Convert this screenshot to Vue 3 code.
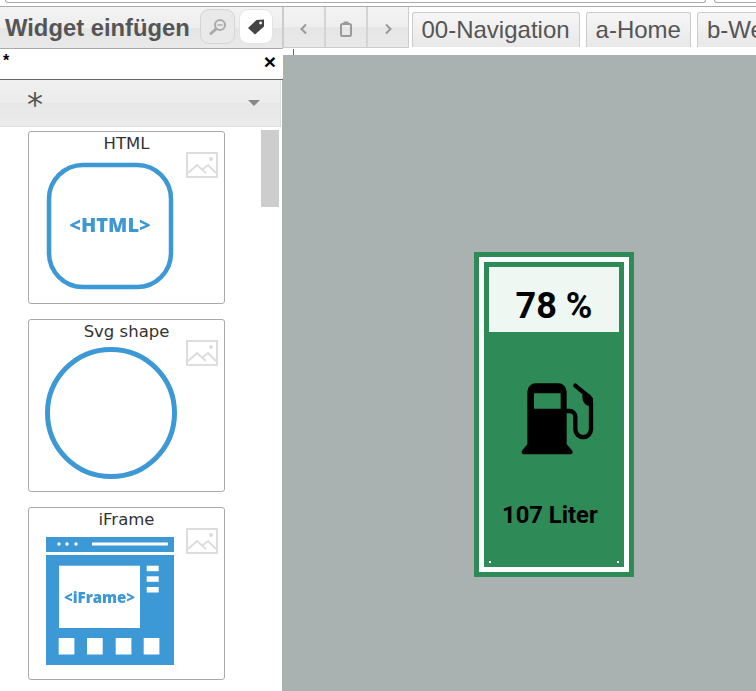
<script setup>
const tabs = ['00-Navigation', 'a-Home', 'b-Wetter']
</script>

<template>
  <div class="page">
    <div class="topstrip">
      <div class="addr a1"></div>
      <div class="addr a2"></div>
    </div>
    <div class="main">
      <aside class="panel">
        <header class="phead">
          <h1 class="ptitle">Widget einfügen</h1>
          <button class="pbtn">
            <svg width="20" height="20" viewBox="0 0 20 20"><circle cx="12" cy="8" r="5" fill="none" stroke="#aaa" stroke-width="2"/><path d="M8 12 3 16.500" stroke="#aaa" stroke-width="3" stroke-linecap="round"/><path d="M9.500 8h5" stroke="#aaa" stroke-width="1.500"/></svg>
          </button>
          <button class="pbtn active">
            <svg width="20" height="20" viewBox="0 0 20 20"><path d="M10.500 3 18 2.500v7L9 17.500 2 11z" fill="#444"/><circle cx="14.600" cy="6" r="1.400" fill="#fff"/></svg>
          </button>
        </header>
        <div class="filter"><span class="fstar">*</span><span class="fx">×</span></div>
        <div class="lower">
          <div class="select"><span class="sstar">*</span><span class="caret"></span></div>
          <div class="list">
            <div class="cards">
              <article class="card">
                <div class="ctitle">HTML</div>
                <svg class="ph" viewBox="0 0 32 26"><use href="#ph"/></svg>
                <div class="preview">
                  <svg width="130" height="130" viewBox="0 0 130 130">
                    <rect x="4" y="4" width="122" height="122" rx="34" fill="#fff" stroke="#3d98d6" stroke-width="4.500"/>
                    <text x="65" y="71" text-anchor="middle" class="svgt t1">&lt;HTML&gt;</text>
                  </svg>
                </div>
              </article>
              <article class="card">
                <div class="ctitle">Svg shape</div>
                <svg class="ph" viewBox="0 0 32 26"><use href="#ph"/></svg>
                <div class="preview">
                  <svg width="134" height="134" viewBox="0 0 134 134">
                    <circle cx="67" cy="67" r="63.500" fill="#fff" stroke="#3d98d6" stroke-width="5"/>
                  </svg>
                </div>
              </article>
              <article class="card">
                <div class="ctitle">iFrame</div>
                <svg class="ph" viewBox="0 0 32 26"><use href="#ph"/></svg>
                <div class="preview">
                  <svg width="128" height="128" viewBox="0 0 128 128">
                    <rect x="0" y="0" width="128" height="15" fill="#3d98d6"/>
                    <rect x="0" y="18" width="128" height="110" fill="#3d98d6"/>
                    <g fill="#fff">
                      <circle cx="13" cy="7" r="1.700"/><circle cx="21" cy="7" r="1.700"/><circle cx="30" cy="7" r="1.700"/>
                      <rect x="46" y="5.500" width="76" height="3"/>
                      <rect x="13" y="28.700" width="81" height="62.300"/>
                      <rect x="100.700" y="28.700" width="12" height="5.500"/><rect x="100.700" y="39.300" width="12" height="5.500"/><rect x="100.700" y="50" width="12" height="5.500"/>
                      <rect x="12.700" y="101" width="15.700" height="16.500"/><rect x="41" y="101" width="15.700" height="16.500"/><rect x="69.700" y="101" width="15.700" height="16.500"/><rect x="97.700" y="101" width="15.700" height="16.500"/>
                    </g>
                    <text x="53.500" y="65.500" text-anchor="middle" class="svgt t2">&lt;iFrame&gt;</text>
                  </svg>
                </div>
              </article>
            </div>
            <div class="scrollbar"><div class="thumb"></div></div>
          </div>
        </div>
      </aside>
      <section class="right">
        <div class="rbar">
          <div class="navgroup">
            <button class="nbtn">
              <svg width="10" height="12" viewBox="0 0 10 12"><path d="M7 1.500 2.500 6 7 10.500" fill="none" stroke="#999" stroke-width="2"/></svg>
            </button>
            <button class="nbtn">
              <svg width="14" height="16" viewBox="0 0 14 16"><rect x="2" y="3" width="10" height="12" rx="1.500" fill="none" stroke="#999" stroke-width="2"/><rect x="4.500" y="0.500" width="5" height="3.500" fill="#999"/></svg>
            </button>
            <button class="nbtn">
              <svg width="10" height="12" viewBox="0 0 10 12"><path d="M3 1.500 7.500 6 3 10.500" fill="none" stroke="#999" stroke-width="2"/></svg>
            </button>
          </div>
          <div class="tabs">
            <div v-for="t in tabs" :key="t" class="tab">{{ t }}</div>
          </div>
        </div>
        <div class="canvaswrap">
          <i class="tick"></i>
          <div class="canvas">
            <div class="widget">
              <div class="wborder">
                <div class="winner">
                  <div class="pct">78 %</div>
                  <svg class="pump" width="75" height="75" viewBox="165 410 225 225">
                    <path fill="#000" fill-rule="evenodd" d="M187 442a25 25 0 0 1 25-25h68a25 25 0 0 1 25 25v158l16 18c4 5 2 12-5 12H177c-7 0-9-7-5-12l15-18zM207 447v46h80v-46z"/>
                    <path fill="none" stroke="#000" stroke-width="13" d="M300 500h14a17 17 0 0 1 17 17v38a22 22 0 0 0 47 0V475"/>
                    <path fill="none" stroke="#000" stroke-width="13" stroke-linecap="round" d="M331 424 372 458"/>
                    <path fill="#000" d="M352 452l20-4 12 14v22h-15c-10-2-18-14-17-32z"/>
                  </svg>
                  <div class="liters">107 Liter</div>
                  <i class="dot d1"></i><i class="dot d2"></i>
                </div>
              </div>
            </div>
          </div>
        </div>
      </section>
    </div>
    <svg width="0" height="0" class="defs">
      <symbol id="ph" viewBox="0 0 32 26">
        <rect x="1" y="1" width="30" height="24" fill="none" stroke="#ddd" stroke-width="2"/>
        <path d="M2 21 11 13l9 8M17 17l5-4 8 8" fill="none" stroke="#ddd" stroke-width="2"/>
        <circle cx="25" cy="7" r="2" fill="#ddd"/>
      </symbol>
    </svg>
  </div>
</template>

<style scoped>
.page {
  width: 756px;
  height: 691px;
  overflow: hidden;
  background: #fff;
  font-family: "Liberation Sans", Arial, sans-serif;
  display: flex;
  flex-direction: column;
}
.defs { position: absolute; }
.topstrip {
  height: 6px;
  flex: none;
  border-bottom: 1px solid #aaa;
  display: flex;
  gap: 8px;
  padding-left: 5px;
  overflow: hidden;
}
.addr {
  height: 2px;
  border: 1px solid #aaa;
  border-top: 0;
  border-radius: 0 0 4px 4px;
  background: #fff;
}
.a1 { width: 699px; }
.a2 { flex: 1; margin-right: -10px; }
.main { flex: 1; display: flex; min-height: 0; }
.panel {
  width: 283px;
  flex: none;
  display: flex;
  flex-direction: column;
  background: #fff;
}
.phead {
  height: 42px;
  flex: none;
  display: flex;
  align-items: center;
  padding: 0 0 2px 5px;
  box-sizing: border-box;
  background: linear-gradient(#f3f3f3 0, #eeeeee 50%, #e5e5e5 50%, #e9e9e9 100%);
  border-bottom: 1px solid #aaa;
  border-right: 1px solid #ccc;
}
.ptitle {
  width: 195px;
  flex: none;
  margin: 3px 0 0;
  font-size: 23.800px;
  font-weight: 700;
  color: #555;
  white-space: nowrap;
}
.pbtn {
  width: 35px;
  height: 35px;
  flex: none;
  padding: 0;
  border: 1px solid #d4d4d4;
  border-radius: 9px;
  background: #e9e9e9;
  display: flex;
  align-items: center;
  justify-content: center;
}
.pbtn.active { width: 34px; margin-left: 4px; background: #fff; border-color: #e4e4e4; }
.filter {
  height: 31px;
  flex: none;
  box-sizing: border-box;
  border-bottom: 1px solid #666;
  display: flex;
  justify-content: space-between;
  padding: 1px 7px 0 3px;
  color: #000;
  font-weight: 700;
}
.fstar { font-size: 16px; line-height: 22px; }
.fx { font-size: 21px; line-height: 23px; }
.lower {
  flex: 1;
  min-height: 0;
  display: flex;
  flex-direction: column;
  border-right: 1px solid #a9b2b0;
}
.select {
  height: 47px;
  flex: none;
  margin-right: 1px;
  box-sizing: border-box;
  border: 1px solid #ddd;
  border-top: 0;
  border-left: 0;
  background: linear-gradient(#f0f0f0 0, #ececec 50%, #e7e7e7 50%, #ebebeb 100%);
  display: flex;
  justify-content: space-between;
  padding: 0 20px 0 27px;
  color: #555;
}
.sstar { font-family: "DejaVu Sans", sans-serif; font-size: 32px; line-height: 48px; }
.caret {
  width: 0;
  height: 0;
  margin-top: 20px;
  border: 6px solid transparent;
  border-top: 6px solid #888;
  border-bottom: 0;
}
.list {
  flex: 1;
  min-height: 0;
  display: flex;
  justify-content: space-between;
  padding: 3px 3px 0 28px;
  overflow: hidden;
}
.cards { width: 197px; display: flex; flex-direction: column; gap: 15px; padding-top: 1px; }
.card {
  position: relative;
  width: 197px;
  height: 173px;
  flex: none;
  box-sizing: border-box;
  border: 1px solid #aaa;
  border-radius: 3px;
  background: #fff;
}
.ctitle {
  text-align: center;
  font-family: "DejaVu Sans", sans-serif;
  font-size: 16.500px;
  line-height: 23px;
  color: #333;
}
.ph { position: absolute; left: 157px; top: 20px; width: 32px; height: 26px; filter: blur(0.3px); }
.preview svg { display: block; filter: blur(0.35px); }
.card:nth-child(1) .preview svg { margin: 6px 0 0 16px; }
.card:nth-child(2) .preview svg { margin: 3px 0 0 14.500px; }
.card:nth-child(3) .preview svg { margin: 6px 0 0 17px; }
.svgt { font-family: "Open Sans", sans-serif; font-weight: 800; fill: #3d98d6; }
.t1 { font-size: 20px; }
.t2 { font-size: 15px; }
.scrollbar { width: 18px; }
.thumb { height: 77px; background: #cdcdcd; }
.right { flex: 1; min-width: 0; display: flex; flex-direction: column; }
.rbar {
  height: 42px;
  flex: none;
  display: flex;
  background: #fff;
}
.navgroup {
  display: flex;
  flex: none;
  width: 126px;
  height: 41px;
  box-sizing: border-box;
  background: linear-gradient(#f3f3f3 0, #eeeeee 50%, #e5e5e5 50%, #e9e9e9 100%);
  border: 1px solid #ccc;
  border-top: 0;
}
.nbtn {
  flex: 1;
  padding: 3px 0 0;
  border: 0;
  border-right: 2px solid #d4d4d4;
  background: none;
  display: flex;
  align-items: center;
  justify-content: center;
}
.nbtn:last-child { border-right: 0; }
.tabs { display: flex; gap: 6px; padding: 5px 0 0 3px; overflow: hidden; }
.tab {
  height: 35px;
  flex: none;
  box-sizing: border-box;
  padding: 0 9.500px 0 8.500px;
  border: 1px solid #ccc;
  border-bottom: 0;
  border-radius: 3px 3px 0 0;
  background: linear-gradient(#f6f6f6, #e8e8e8);
  color: #555;
  font-size: 24px;
  line-height: 34px;
  white-space: nowrap;
}
.canvaswrap { flex: 1; position: relative; padding-top: 6px; min-height: 0; display: flex; }
.tick { position: absolute; left: 10px; top: 0; width: 1px; height: 6px; background: #666; }
.canvas { flex: 1; position: relative; background: #a9b2b0; }
.widget {
  position: absolute;
  left: 191px;
  top: 197px;
  width: 160px;
  height: 325px;
  box-sizing: border-box;
  border: 5px solid #2e8b57;
}
.wborder { height: 100%; box-sizing: border-box; border: 5px solid #fbfffd; }
.winner {
  position: relative;
  height: 100%;
  box-sizing: border-box;
  background: #2e8b57;
  padding: 5px;
  display: flex;
  flex-direction: column;
  font-family: Roboto, sans-serif;
  color: #000;
  font-weight: 700;
}
.pct {
  height: 65px;
  flex: none;
  background: #eff7f3;
  text-align: center;
  font-size: 36px;
  line-height: 78px;
}
.pump { flex: none; margin: 49px 0 0 31px; }
.liters { margin: 44px 0 0 13px; font-size: 23.800px; line-height: 30px; }
.dot { position: absolute; top: 299px; width: 2px; height: 2px; background: #fff; }
.d1 { left: 5px; }
.d2 { right: 5px; }
</style>
